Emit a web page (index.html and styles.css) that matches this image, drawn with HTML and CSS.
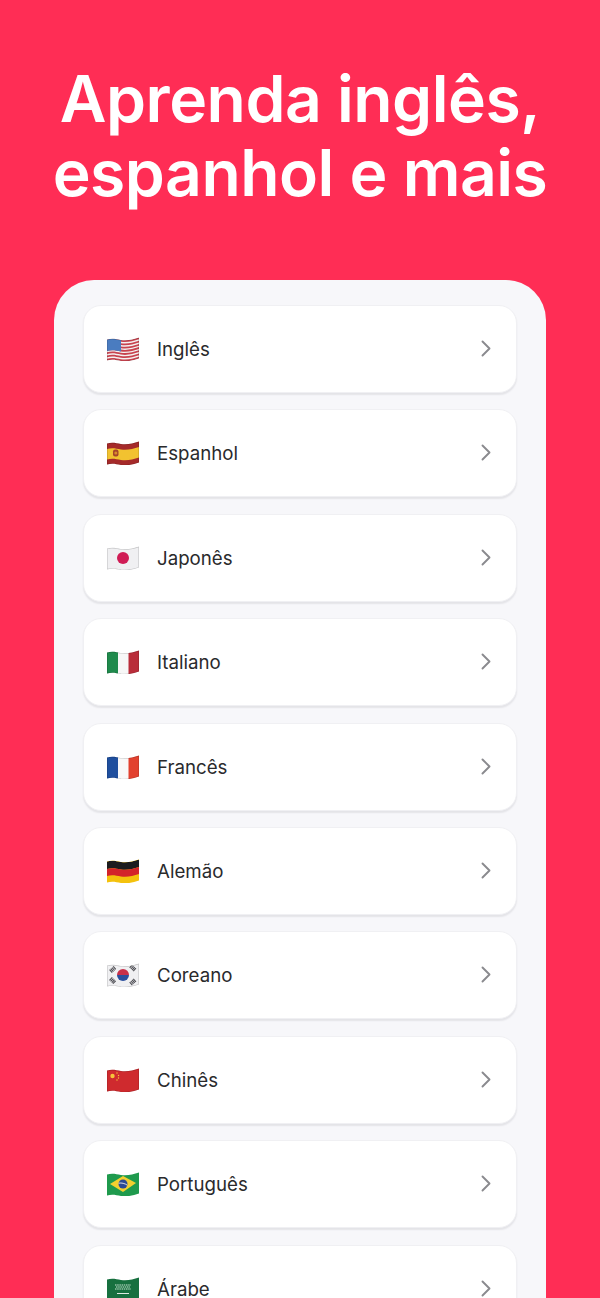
FILE: index.html
```html
<!DOCTYPE html>
<html lang="pt">
<head>
<meta charset="utf-8">
<title>Aprenda inglês, espanhol e mais</title>
<link rel="stylesheet" href="styles.css">
</head>
<body>
<svg class="defs" aria-hidden="true"><defs>
<clipPath id="wave"><path d="M0 2.500c5-1.500 9-.5 14 .5c6 1 12-.5 18-2.500v21c-6 2-12 3.500-18 2.500c-5-1-9-2-14-.5z"/></clipPath>
<path id="edge" d="M0 2.500c5-1.500 9-.5 14 .5c6 1 12-.5 18-2.500v21c-6 2-12 3.500-18 2.500c-5-1-9-2-14-.5z" fill="none" stroke="#000" stroke-opacity=".18" stroke-width="1.200"/>
<symbol id="chev" viewBox="0 0 12 18"><path d="M2.500 1.500l7 7-7 7" fill="none" stroke="#8a8a8e" stroke-width="1.900" stroke-linecap="round" stroke-linejoin="round"/></symbol>
</defs></svg>
<header class="hero"><h1 class="title">Aprenda inglês,<br>espanhol e mais</h1></header>
<main class="panel">
<a class="row"><svg class="flag" viewBox="0 0 32 24"><g clip-path="url(#wave)"><rect width="32" height="25" fill="#f4f1f1"/>
<g fill="#c8434f"><path d="M0 2.500c5-1.500 9-.5 14 .5c6 1 12-.5 18-2.500v1.800c-6 2-12 3.500-18 2.500c-5-1-9-2-14-.5z"/><path d="M0 5.700c5-1.500 9-.5 14 .5c6 1 12-.5 18-2.500v1.800c-6 2-12 3.500-18 2.500c-5-1-9-2-14-.5z"/><path d="M0 8.900c5-1.500 9-.5 14 .5c6 1 12-.5 18-2.500v1.800c-6 2-12 3.500-18 2.500c-5-1-9-2-14-.5z"/><path d="M0 12.100c5-1.500 9-.5 14 .5c6 1 12-.5 18-2.500v1.800c-6 2-12 3.500-18 2.500c-5-1-9-2-14-.5z"/><path d="M0 15.300c5-1.500 9-.5 14 .5c6 1 12-.5 18-2.500v1.800c-6 2-12 3.500-18 2.500c-5-1-9-2-14-.5z"/><path d="M0 18.500c5-1.500 9-.5 14 .5c6 1 12-.5 18-2.500v1.800c-6 2-12 3.500-18 2.500c-5-1-9-2-14-.5z"/><path d="M0 21.700c5-1.500 9-.5 14 .5c6 1 12-.5 18-2.500v1.800c-6 2-12 3.500-18 2.500c-5-1-9-2-14-.5z"/></g>
<path d="M0 2.500c5-1.500 9-.5 14 .5v11.500c-5-1-9-2-14-.5z" fill="#4a7cc0"/><use href="#edge"/></g></svg><span class="name">Inglês</span><svg class="chev"><use href="#chev"/></svg></a>

<a class="row"><svg class="flag" viewBox="0 0 32 24"><g clip-path="url(#wave)"><rect width="32" height="25" fill="#a52a2a"/>
<path d="M0 8c5-1.500 9-.5 14 .5c6 1 12-.5 18-2.500v10.500c-6 2-12 3.500-18 2.500c-5-1-9-2-14-.5z" fill="#f2c230"/>
<rect x="6" y="8.500" width="5.500" height="7" rx="2" fill="#a8442a"/><circle cx="8.800" cy="12" r="1.500" fill="#d98b2b"/><use href="#edge"/></g></svg><span class="name">Espanhol</span><svg class="chev"><use href="#chev"/></svg></a>

<a class="row"><svg class="flag" viewBox="0 0 32 24"><g clip-path="url(#wave)"><rect width="32" height="25" fill="#f0f0f2"/><circle cx="16" cy="12" r="6" fill="#d01c55"/><use href="#edge"/></g></svg><span class="name">Japonês</span><svg class="chev"><use href="#chev"/></svg></a>

<a class="row"><svg class="flag" viewBox="0 0 32 24"><g clip-path="url(#wave)"><rect width="11" height="25" fill="#1f8a4c"/><rect x="11" width="10.500" height="25" fill="#f7f7f7"/><rect x="21.500" width="10.500" height="25" fill="#b92d3a"/><use href="#edge"/></g></svg><span class="name">Italiano</span><svg class="chev"><use href="#chev"/></svg></a>

<a class="row"><svg class="flag" viewBox="0 0 32 24"><g clip-path="url(#wave)"><rect width="11" height="25" fill="#1f4f9e"/><rect x="11" width="10.500" height="25" fill="#f9f9f9"/><rect x="21.500" width="10.500" height="25" fill="#e2412f"/><use href="#edge"/></g></svg><span class="name">Francês</span><svg class="chev"><use href="#chev"/></svg></a>

<a class="row"><svg class="flag" viewBox="0 0 32 24"><g clip-path="url(#wave)"><rect width="32" height="25" fill="#f4c20d"/>
<path d="M0 2.500c5-1.500 9-.5 14 .5c6 1 12-.5 18-2.500v7.500c-6 2-12 3.500-18 2.500c-5-1-9-2-14-.5z" fill="#1c1c1e"/>
<path d="M0 10c5-1.500 9-.5 14 .5c6 1 12-.5 18-2.500v7c-6 2-12 3.500-18 2.500c-5-1-9-2-14-.5z" fill="#d3232a"/></g></svg><span class="name">Alemão</span><svg class="chev"><use href="#chev"/></svg></a>

<a class="row"><svg class="flag" viewBox="0 0 32 24"><g clip-path="url(#wave)"><rect width="32" height="25" fill="#f0f0f2"/>
<path d="M10 12a6 6 0 0 1 12 0z" fill="#c8304a"/><path d="M10 12a6 6 0 0 0 12 0z" fill="#2a4f9e"/>
<g stroke="#4c4c52" stroke-width="4" stroke-dasharray="1.100 .5"><path d="M3.500 8.500l4.500-4M28 7l-4.500-4M3.500 15.500l4.500 4.500M28 17l-4.500 4"/></g><use href="#edge"/></g></svg><span class="name">Coreano</span><svg class="chev"><use href="#chev"/></svg></a>

<a class="row"><svg class="flag" viewBox="0 0 32 24"><g clip-path="url(#wave)"><rect width="32" height="25" fill="#cf2a2e"/>
<g fill="#f6c33b"><circle cx="5.500" cy="8" r="2.200"/><circle cx="10" cy="5" r=".7"/><circle cx="11.500" cy="7.500" r=".7"/><circle cx="11.500" cy="10" r=".7"/><circle cx="10" cy="12" r=".7"/></g><use href="#edge"/></g></svg><span class="name">Chinês</span><svg class="chev"><use href="#chev"/></svg></a>

<a class="row"><svg class="flag" viewBox="0 0 32 24"><g clip-path="url(#wave)"><rect width="32" height="25" fill="#1f9a4d"/>
<path d="M3 12L16 4l13 7-13 9z" fill="#f3d02f"/><circle cx="16" cy="12" r="4.500" fill="#2b4a94"/><path d="M11.600 11.200c3-.6 6.200.2 8.700 2" stroke="#eee" stroke-width=".9" fill="none"/></g></svg><span class="name">Português</span><svg class="chev"><use href="#chev"/></svg></a>

<a class="row"><svg class="flag" viewBox="0 0 32 24"><g clip-path="url(#wave)"><rect width="32" height="25" fill="#17703f"/>
<path d="M8 8h16M9 10h14M8 12h16" stroke="#cfe5d6" stroke-width="1.200" stroke-dasharray="1.500 .7"/><path d="M10 16.500h12" stroke="#dcebe1" stroke-width="1"/></g></svg><span class="name">Árabe</span><svg class="chev"><use href="#chev"/></svg></a>
</main>
</body>
</html>
```
FILE: styles.css
```css
html, body {
  margin: 0;
  padding: 0;
}
body {
  width: 600px;
  height: 1298px;
  overflow: hidden;
  background: #ff2d55;
  font-family: Inter, "Liberation Sans", sans-serif;
}
.defs {
  display: block;
  width: 0;
  height: 0;
}
.hero {
  height: 280px;
  padding-top: 62px;
  box-sizing: border-box;
}
.title {
  margin: 0;
  color: #fff;
  font-size: 64.200px;
  font-weight: 600;
  line-height: 74px;
  letter-spacing: -0.500px;
  text-align: center;
}
.panel {
  box-sizing: border-box;
  width: 492px;
  margin: 0 auto;
  padding: 25px 29px 0;
  background: #f7f7fa;
  border-radius: 40px 40px 0 0;
  display: flex;
  flex-direction: column;
  gap: 16.400px;
}
.row {
  box-sizing: border-box;
  height: 88px;
  flex: none;
  display: flex;
  align-items: center;
  padding: 0 24px 0 23px;
  background: #fff;
  border: 1px solid #f0f0f3;
  border-radius: 18px;
  box-shadow: 0 2px 1.500px #e4e4e8;
}
.flag {
  width: 32px;
  height: 24px;
  flex: none;
}
.name {
  flex: 1;
  margin-left: 18px;
  padding-top: 2px;
  color: #2a2a2c;
  font-size: 18.700px;
  line-height: 24px;
}
.chev {
  width: 12px;
  height: 18px;
  flex: none;
}
```
